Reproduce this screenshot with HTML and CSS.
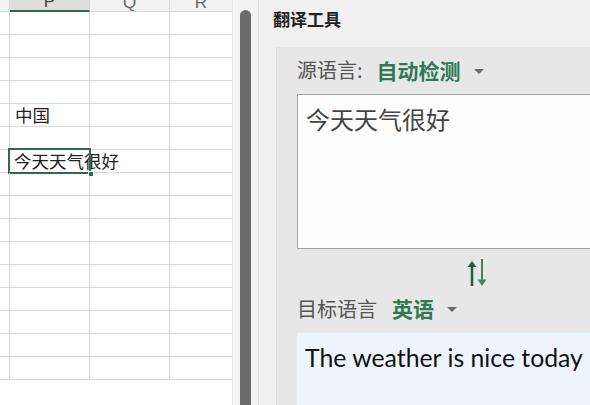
FILE: index.html
```html
<!DOCTYPE html>
<html lang="zh">
<head>
    <meta charset="UTF-8">
    <title>翻译工具</title>
    <link rel="stylesheet" href="styles.css">
</head>
<body>
    <div class="app">
        <div class="sheet">
            <div class="row head">
                <div class="cell"></div>
                <div class="cell col-sel"><span>P</span></div>
                <div class="cell"><span>Q</span></div>
                <div class="cell"><span>R</span></div>
            </div>
            <div class="row"><div class="cell"></div><div class="cell"></div><div class="cell"></div><div class="cell"></div></div>
            <div class="row"><div class="cell"></div><div class="cell"></div><div class="cell"></div><div class="cell"></div></div>
            <div class="row"><div class="cell"></div><div class="cell"></div><div class="cell"></div><div class="cell"></div></div>
            <div class="row"><div class="cell"></div><div class="cell"></div><div class="cell"></div><div class="cell"></div></div>
            <div class="row"><div class="cell"></div><div class="cell text">中国</div><div class="cell"></div><div class="cell"></div></div>
            <div class="row"><div class="cell"></div><div class="cell"></div><div class="cell"></div><div class="cell"></div></div>
            <div class="row"><div class="cell"></div><div class="cell text active">今天天气很好<i class="handle"></i></div><div class="cell"></div><div class="cell"></div></div>
            <div class="row"><div class="cell"></div><div class="cell"></div><div class="cell"></div><div class="cell"></div></div>
            <div class="row"><div class="cell"></div><div class="cell"></div><div class="cell"></div><div class="cell"></div></div>
            <div class="row"><div class="cell"></div><div class="cell"></div><div class="cell"></div><div class="cell"></div></div>
            <div class="row"><div class="cell"></div><div class="cell"></div><div class="cell"></div><div class="cell"></div></div>
            <div class="row"><div class="cell"></div><div class="cell"></div><div class="cell"></div><div class="cell"></div></div>
            <div class="row"><div class="cell"></div><div class="cell"></div><div class="cell"></div><div class="cell"></div></div>
            <div class="row"><div class="cell"></div><div class="cell"></div><div class="cell"></div><div class="cell"></div></div>
            <div class="row"><div class="cell"></div><div class="cell"></div><div class="cell"></div><div class="cell"></div></div>
            <div class="row"><div class="cell"></div><div class="cell"></div><div class="cell"></div><div class="cell"></div></div>
        </div>

        <div class="scrollbar">
            <div class="thumb"></div>
        </div>

        <div class="panel">
            <h1 class="panel-title">翻译工具</h1>
            <div class="card">
                <div class="lang-row">
                    <span class="lang-label">源语言:</span>
                    <span class="lang-value">自动检测</span>
                    <span class="caret"></span>
                </div>
                <div class="box source">今天天气很好</div>
                <div class="swap-row">
                    <svg class="swap" width="24" height="30" viewBox="0 0 24 30">
                        <line x1="6" y1="7" x2="6" y2="28" stroke="#1f6342" stroke-width="2.6"/>
                        <polygon points="1.5,9 6,3 10.5,9" fill="#1f6342"/>
                        <line x1="16" y1="1" x2="16" y2="23" stroke="#3a8862" stroke-width="2"/>
                        <polygon points="11.5,21.5 16,28 20.5,21.5" fill="#3a8862"/>
                    </svg>
                </div>
                <div class="lang-row target">
                    <span class="lang-label">目标语言</span>
                    <span class="lang-value">英语</span>
                    <span class="caret"></span>
                </div>
                <div class="box result">The weather is nice today</div>
            </div>
        </div>
    </div>
</body>
</html>
```

FILE: styles.css
```css
* {
    box-sizing: border-box;
}
body {
    margin: 0;
    padding: 0;
    width: 590px;
    height: 405px;
    overflow: hidden;
    font-family: "Noto Sans CJK SC", "Noto Sans", sans-serif;
    background-color: #ffffff;
}
.app {
    display: flex;
    height: 405px;
    overflow: hidden;
}

/* spreadsheet */
.sheet {
    width: 232px;
    flex-shrink: 0;
    background-color: #ffffff;
}
.row {
    display: grid;
    grid-template-columns: 10px 80px 80px 62px;
    height: 23px;
}
.cell {
    border-right: 1px solid #d8d8d8;
    border-bottom: 1px solid #d8d8d8;
    position: relative;
}
.row .cell:last-child {
    border-right: none;
}
.row.head {
    height: 12px;
}
.head .cell {
    background-color: #f2f2f2;
    overflow: hidden;
    display: flex;
    justify-content: center;
    align-items: flex-end;
    color: #666;
    font-family: "Liberation Sans", sans-serif;
    font-size: 17px;
    line-height: 1;
}
.head .col-sel {
    background-color: #dedede;
    border-bottom: 2px solid #2d6b49;
    color: #444;
}
.text {
    font-size: 17.5px;
    line-height: 22px;
    padding-left: 5px;
    color: #222;
    white-space: nowrap;
}
.active {
    padding-left: 4px;
}
.active::before {
    content: "";
    position: absolute;
    left: -2px;
    top: -2px;
    right: -2px;
    bottom: -2px;
    border: 2px solid #2d6b49;
}
.handle {
    position: absolute;
    right: -5px;
    bottom: -5px;
    width: 6px;
    height: 6px;
    background-color: #2d6b49;
    border: 1px solid #ffffff;
    z-index: 2;
}

/* scrollbar between sheet and panel */
.scrollbar {
    width: 27px;
    flex-shrink: 0;
    background-color: #f3f3f3;
    border-left: 1px solid #e4e4e4;
    border-right: 1px solid #dcdcdc;
    padding: 10px 7px 0 7px;
    overflow: hidden;
}
.thumb {
    width: 11px;
    height: 400px;
    background-color: #6b6b6b;
    border-radius: 6px 6px 0 0;
}

/* translate panel */
.panel {
    flex: 1;
    background-color: #f0f0f0;
    overflow: hidden;
}
.panel-title {
    margin: 0;
    height: 47px;
    padding: 7px 0 0 14px;
    font-size: 17px;
    line-height: 24px;
    font-weight: bold;
    color: #222;
}
.card {
    margin-left: 17px;
    height: 358px;
    background-color: #e7e7e7;
    border-left: 1px solid #dddddd;
    padding-left: 20px;
    width: 420px;
}
.lang-row {
    display: flex;
    align-items: center;
    height: 44px;
    padding-top: 1px;
    margin-bottom: 3px;
}
.lang-label {
    font-size: 20px;
    color: #555;
}
.lang-value {
    margin-left: 14px;
    font-size: 21px;
    font-weight: bold;
    color: #2f7a52;
}
.caret {
    margin-left: 13px;
    margin-top: 3px;
    width: 0;
    height: 0;
    border-left: 5px solid transparent;
    border-right: 5px solid transparent;
    border-top: 5px solid #6b6b6b;
}
.box {
    width: 362px;
}
.source {
    height: 155px;
    background-color: #fdfdfd;
    border: 1px solid #a3a3a3;
    padding: 8px 8px;
    font-size: 24px;
    line-height: 32px;
    color: #444;
}
.swap-row {
    width: 362px;
    height: 43px;
    display: flex;
    justify-content: center;
    padding-top: 9px;
}
.target {
    height: 32px;
    margin-bottom: 9px;
    padding-top: 0;
}
.target .lang-value {
    margin-left: 15px;
}
.result {
    height: 80px;
    background-color: #edf5fc;
    padding: 9px 8px;
    font-family: Lato, sans-serif;
    font-size: 24.8px;
    line-height: 32px;
    color: #111;
}
```
